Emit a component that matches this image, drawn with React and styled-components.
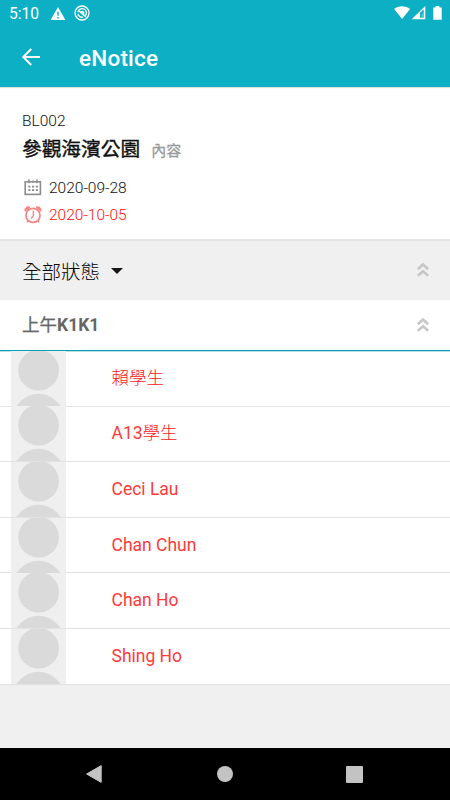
import React from "react";
import styled, { createGlobalStyle } from "styled-components";

const students = [
  { han: "賴學生" },
  { latin: "A13", han: "學生" },
  { latin: "Ceci Lau" },
  { latin: "Chan Chun" },
  { latin: "Chan Ho" },
  { latin: "Shing Ho" },
];

const App = () => {
  return (
    <Screen>
      <GlobalStyle />
      <StatusBar>
        <Time>5:10</Time>
        <WarningIcon />
        <SyncIcon />
        <Spacer />
        <SignalIcons />
      </StatusBar>
      <Toolbar>
        <BackIcon />
        <PageTitle>eNotice</PageTitle>
      </Toolbar>
      <Notice>
        <Code>BL002</Code>
        <TitleRow>
          <Title>參觀海濱公園</Title>
          <ContentLink>內容</ContentLink>
        </TitleRow>
        <DateRow>
          <CalendarIcon />
          2020-09-28
        </DateRow>
        <DateRow $due>
          <AlarmIcon />
          2020-10-05
        </DateRow>
      </Notice>
      <FilterBar>
        <FilterText>全部狀態</FilterText>
        <Caret />
        <Spacer />
        <DoubleChevron />
      </FilterBar>
      <GroupBar>
        <GroupText>
          上午<b>K1K1</b>
        </GroupText>
        <Spacer />
        <DoubleChevron />
      </GroupBar>
      <List>
        {students.map(({ latin, han }, index) => (
          <Row key={index}>
            <Avatar />
            <Name>
              {latin}
              {han && <Han>{han}</Han>}
            </Name>
          </Row>
        ))}
      </List>
      <Empty />
      <NavBar>
        <svg width="18" height="20" viewBox="0 0 18 20">
          <path d="M1.6 10 16.2 1.6v16.8z" fill="#c3c3c3" stroke="#c3c3c3" strokeLinejoin="round" />
        </svg>
        <HomeButton />
        <RecentButton />
      </NavBar>
    </Screen>
  );
};

export default App;

const WarningIcon = () => (
  <svg width="16" height="14" viewBox="0 0 16 14">
    <path d="M8 0 15.4 13H.6z" fill="#fff" />
    <path d="M8 4.8v4M8 10v1.6" stroke="#0dafc4" strokeWidth="1.4" />
  </svg>
);

const SyncIcon = () => (
  <SyncSvg width="16" height="16" viewBox="0 0 16 16" fill="none">
    <circle cx="8" cy="8" r="7" stroke="#fff" strokeWidth="1.3" />
    <path d="M3.9 7.2A4.3 4.3 0 1 1 11.3 10.8" stroke="#fff" strokeWidth="1.3" />
    <path d="M4.8 5.8 12 12M3.9 8.8a4.3 4.3 0 0 0 5.2 3.3" stroke="#fff" strokeWidth="1.4" />
    <path d="M6 6.6 9 5.8l1.5 2L10 10z" fill="#fff" />
  </SyncSvg>
);

const SignalIcons = () => (
  <svg width="50" height="15" viewBox="0 0 50 15">
    <path d="M.1 3C4.7-.6 11.5-.6 16.1 3L8.1 13z" fill="#fff" />
    <path d="M31.3 0v13.2H17.6z" fill="#fff" />
    <path d="M26 6.7 29.7 3.3v8.4H26z" fill="#0dafc4" />
    <path d="M28.2 7.8v4" stroke="#fff" strokeWidth=".5" />
    <path d="M39.3 1.5h2.3V0h3.8v1.5h2.3v12.2h-8.4z" fill="#fff" />
  </svg>
);

const BackIcon = () => (
  <svg width="20" height="20" viewBox="0 0 20 20" fill="none" stroke="#fff" strokeWidth="2">
    <path d="M19 10H2.5M10.2 2 2.3 10l7.9 8" />
  </svg>
);

const CalendarIcon = () => (
  <svg width="18" height="18" viewBox="0 0 18 18" fill="none" stroke="#8c8c8c">
    <rect x="1.2" y="2.8" width="15.2" height="12.6" strokeWidth="1.6" />
    <path d="M5 .3v4M13 .3v4M9 1.4v2.4" strokeWidth="1.4" />
    <path d="M4.2 7.6h9.8M4.2 11.2h9.8" strokeWidth="1.7" strokeDasharray="2.2 1.6" />
  </svg>
);

const AlarmIcon = () => (
  <svg width="18" height="18" viewBox="0 0 18 18" fill="none" stroke="#f58585">
    <path d="M1.2 5.2C0 2.5 3-.3 6 1.2zM16.8 5.2C18 2.5 15-.3 12 1.2z" fill="#f58585" />
    <circle cx="9" cy="9.4" r="7" strokeWidth="1.7" fill="#fff" />
    <path d="M9.4 4.8v5L7 12.5" strokeWidth="1.4" />
    <path d="m4 14.8-1 1.6M14 14.8l1 1.6" strokeWidth="1.4" />
  </svg>
);

const DoubleChevron = () => (
  <ChevronSvg width="12" height="14" viewBox="0 0 12 14" fill="none">
    <path d="M.8 6.2 6 1.6l5.2 4.6M.8 12.8 6 8.2l5.2 4.6" stroke="#c7c7c7" strokeWidth="2.7" />
  </ChevronSvg>
);

// the placeholder picture is a head and shoulders cropped by the row
const Avatar = () => (
  <AvatarSvg width="55" height="55" viewBox="0 0 55 55">
    <rect width="55" height="55" fill="#efefef" />
    <circle cx="27.6" cy="19.2" r="20.4" fill="#dadada" />
    <path d="M5.4 55C17 38.5 38 38.5 49.6 55z" fill="#dadada" />
  </AvatarSvg>
);

const GlobalStyle = createGlobalStyle`
  * {
    box-sizing: border-box;
  }
  body {
    margin: 0;
    font-family: Roboto, "Noto Sans CJK TC", sans-serif;
  }
`;

const Screen = styled.div`
  display: flex;
  flex-direction: column;
  width: 450px;
  height: 800px;
  background: #fff;
  overflow: hidden;
`;

const Spacer = styled.div`
  flex: 1;
`;

const StatusBar = styled.div`
  display: flex;
  align-items: center;
  height: 27px;
  padding: 0 6px 0 9px;
  background: #0dafc4;
  color: #fff;
`;

const Time = styled.span`
  width: 41px;
  padding-top: 2px;
  font-size: 15.6px;
  line-height: 25px;
`;

const SyncSvg = styled.svg`
  margin: 0 0 1px 8px;
`;

const ChevronSvg = styled.svg`
  margin-bottom: 1px;
`;

const Toolbar = styled.div`
  display: flex;
  align-items: center;
  height: 60px;
  padding: 0 21px;
  background: #0dafc4;
`;

const PageTitle = styled.h1`
  margin: 2px 0 0 38px;
  font-size: 22.5px;
  font-weight: 500;
  letter-spacing: 0.2px;
  color: #fff;
`;

const Notice = styled.div`
  flex: none;
  height: 154px;
  padding: 24px 22px 0;
  border-bottom: 2px solid #e4e4e4;
  box-shadow: inset 0 2px 1px -1px #ddd;
`;

const Code = styled.div`
  font-size: 15.5px;
  font-weight: 300;
  line-height: 21px;
  color: #111;
`;

const TitleRow = styled.div`
  display: flex;
  align-items: center;
  height: 33px;
`;

const Title = styled.h2`
  margin: 1px 0 0;
  font-size: 19.7px;
  font-weight: 400;
  line-height: 33px;
  color: #111;
  -webkit-text-stroke: 0.4px #111;
`;

const ContentLink = styled.span`
  margin: 2px 0 0 11px;
  font-size: 15px;
  font-weight: 400;
  color: #999;
  -webkit-text-stroke: 0.3px #999;
`;

const DateRow = styled.div`
  display: flex;
  align-items: center;
  gap: 7px;
  height: 26px;
  margin-top: ${(props) => (props.$due ? 1 : 10)}px;
  padding-left: 2px;
  font-size: 15.5px;
  font-weight: 300;
  color: ${(props) => (props.$due ? "#ff1010" : "#111")};
`;

const FilterBar = styled.div`
  display: flex;
  align-items: center;
  flex: none;
  height: 59px;
  padding: 0 21px 0 22px;
  background: #f0f0f0;
`;

const FilterText = styled.span`
  margin-top: 4px;
  font-size: 19.5px;
  line-height: 30px;
  font-weight: 300;
  color: #000;
`;

const Caret = styled.span`
  margin-left: 11px;
  border: 6px solid transparent;
  border-top-color: #161616;
  border-bottom: 0;
`;

const GroupBar = styled.div`
  display: flex;
  align-items: center;
  flex: none;
  height: 51px;
  padding: 0 21px 0 22px;
  border-bottom: 1px solid #0d9fb3;
`;

const GroupText = styled.span`
  margin-bottom: 3px;
  font-size: 17.5px;
  color: #666;
  -webkit-text-stroke: 0.3px #666;

  b {
    font-weight: 700;
    -webkit-text-stroke: 0;
  }
`;

const List = styled.div`
  display: flex;
  flex-direction: column;
  box-shadow: inset 0 1px 0 #b9dde4;
`;

const Row = styled.div`
  display: flex;
  align-items: center;
  height: 55.6px;
  padding-left: 11px;
  border-bottom: 1px solid #e0e2e3;
`;

const AvatarSvg = styled.svg`
  flex: none;
`;

const Name = styled.span`
  margin: 0 0 1px 45.5px;
  font-size: 17.5px;
  line-height: 26px;
  color: #ff3a3a;
  font-weight: 400;
`;

const Han = styled.span`
  font-weight: 300;
  color: #ff2020;
`;

const Empty = styled.div`
  flex: 1;
  background: #f0f0f0;
`;

const NavBar = styled.div`
  display: flex;
  align-items: center;
  justify-content: space-between;
  height: 52px;
  padding: 0 87px 0 85px;
  background: #000;
`;

const HomeButton = styled.span`
  width: 16px;
  height: 16px;
  border-radius: 50%;
  background: #c3c3c3;
`;

const RecentButton = styled.span`
  width: 17px;
  height: 17px;
  border-radius: 1px;
  background: #c3c3c3;
`;
